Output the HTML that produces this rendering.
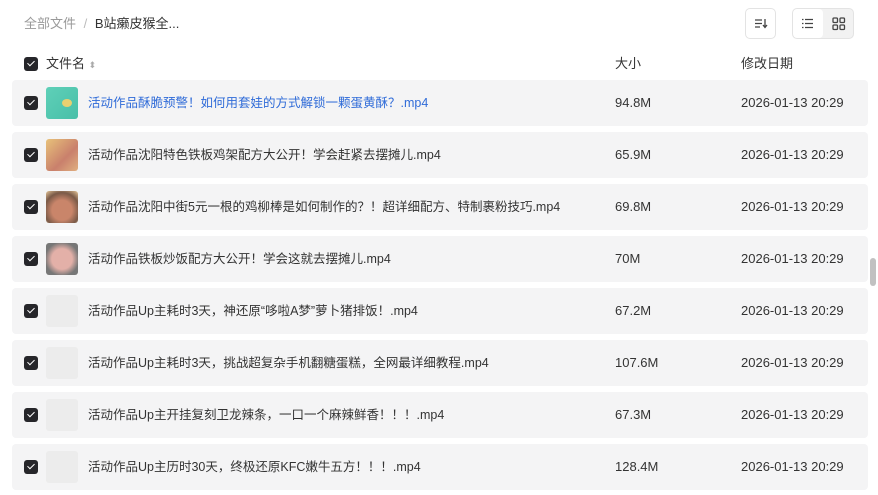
<!DOCTYPE html><html><head><meta charset="utf-8"><style>
*{margin:0;padding:0;box-sizing:border-box}
body{width:878px;height:495px;overflow:hidden;background:#fff;font-family:"Liberation Sans","Noto Sans CJK SC",sans-serif;font-size:13px;line-height:16px;color:#333;position:relative}
.abs{position:absolute}
.cb{position:absolute;width:14px;height:14px;background:#26262a;border-radius:3px}
.cb:after{content:"";position:absolute;left:4.5px;top:2px;width:3px;height:6px;border:solid #fff;border-width:0 1.6px 1.6px 0;transform:rotate(45deg)}
.row{position:absolute;left:12px;width:856px;height:46px;background:#f4f4f5;border-radius:4px}
.row .cb{left:12px;top:16px}
.th{position:absolute;left:34px;top:7px;width:32px;height:32px;border-radius:3px;background:#ececec}
.nm{position:absolute;left:76px;top:15px;font-size:12.5px;line-height:16px;color:#333;white-space:nowrap}
.sz{position:absolute;left:603px;top:15px}
.dt{position:absolute;left:729px;top:15px}
</style></head><body>
<div class="abs" style="left:24px;top:16px;color:#999">全部文件 <span style="color:#bbb;margin:0 4px">/</span> <span style="color:#333">B站癞皮猴全...</span></div>
<div class="abs" style="left:745px;top:8px;width:31px;height:31px;border:1px solid #e3e3e3;border-radius:5px"><svg width="29" height="29" viewBox="0 0 29 29"><path d="M9 11h7M9 14.5h7M9 18h5M19 10v8M17 16l2 2.5 2-2.5" stroke="#444" stroke-width="1.3" fill="none"/></svg></div>
<div class="abs" style="left:792px;top:8px;width:62px;height:31px;border:1px solid #e3e3e3;border-radius:5px;background:#f2f2f2;overflow:hidden">
<div class="abs" style="left:0;top:0;width:30px;height:29px;background:#fff;border-radius:4px"><svg width="30" height="29"><g stroke="#444" stroke-width="1.3"><path d="M12 10.5h8M12 14.5h8M12 18.5h8M9 10.5h1.5M9 14.5h1.5M9 18.5h1.5"/></g></svg></div>
<svg class="abs" style="left:31px;top:0" width="30" height="29"><g stroke="#444" stroke-width="1.3" fill="none"><rect x="9" y="9" width="4.5" height="4.5" rx="1"/><rect x="16" y="9" width="4.5" height="4.5" rx="1"/><rect x="9" y="16" width="4.5" height="4.5" rx="1"/><rect x="16" y="16" width="4.5" height="4.5" rx="1"/></g></svg></div>
<div class="cb" style="left:24px;top:57px"></div>
<div class="abs" style="left:46px;top:56px;font-size:13px">文件名 <span style="color:#aaa;font-size:9px">⬍</span></div>
<div class="abs" style="left:615px;top:56px">大小</div>
<div class="abs" style="left:741px;top:56px">修改日期</div>

<div class="row" style="top:80px"><div class="cb"></div><div class="th" style="background:linear-gradient(135deg,#5fd0b8,#48bfa8)"><div style="position:absolute;left:16px;top:12px;width:10px;height:8px;background:#e8d070;border-radius:50%"></div></div><div class="nm" style="color:#2f6bd8">活动作品酥脆预警！如何用套娃的方式解锁一颗蛋黄酥？.mp4</div><div class="sz">94.8M</div><div class="dt">2026-01-13 20:29</div></div>
<div class="row" style="top:132px"><div class="cb"></div><div class="th" style="background:linear-gradient(135deg,#e8c27a,#c9806c 60%,#e0b080)"></div><div class="nm">活动作品沈阳特色铁板鸡架配方大公开！学会赶紧去摆摊儿.mp4</div><div class="sz">65.9M</div><div class="dt">2026-01-13 20:29</div></div>
<div class="row" style="top:184px"><div class="cb"></div><div class="th" style="background:radial-gradient(circle at 50% 60%,#c9856a 40%,#7a5a48 70%,#e6c79a)"></div><div class="nm">活动作品沈阳中街5元一根的鸡柳棒是如何制作的？！超详细配方、特制裹粉技巧.mp4</div><div class="sz">69.8M</div><div class="dt">2026-01-13 20:29</div></div>
<div class="row" style="top:236px"><div class="cb"></div><div class="th" style="background:radial-gradient(circle,#e3b0a8 45%,#777 75%)"></div><div class="nm">活动作品铁板炒饭配方大公开！学会这就去摆摊儿.mp4</div><div class="sz">70M</div><div class="dt">2026-01-13 20:29</div></div>
<div class="row" style="top:288px"><div class="cb"></div><div class="th"></div><div class="nm">活动作品Up主耗时3天，神还原“哆啦A梦”萝卜猪排饭！.mp4</div><div class="sz">67.2M</div><div class="dt">2026-01-13 20:29</div></div>
<div class="row" style="top:340px"><div class="cb"></div><div class="th"></div><div class="nm">活动作品Up主耗时3天，挑战超复杂手机翻糖蛋糕，全网最详细教程.mp4</div><div class="sz">107.6M</div><div class="dt">2026-01-13 20:29</div></div>
<div class="row" style="top:392px"><div class="cb"></div><div class="th"></div><div class="nm">活动作品Up主开挂复刻卫龙辣条，一口一个麻辣鲜香！！！.mp4</div><div class="sz">67.3M</div><div class="dt">2026-01-13 20:29</div></div>
<div class="row" style="top:444px"><div class="cb"></div><div class="th"></div><div class="nm">活动作品Up主历时30天，终极还原KFC嫩牛五方！！！.mp4</div><div class="sz">128.4M</div><div class="dt">2026-01-13 20:29</div></div>
<div class="abs" style="left:870px;top:258px;width:6px;height:28px;background:#c1c1c1;border-radius:3px"></div>
</body></html>
